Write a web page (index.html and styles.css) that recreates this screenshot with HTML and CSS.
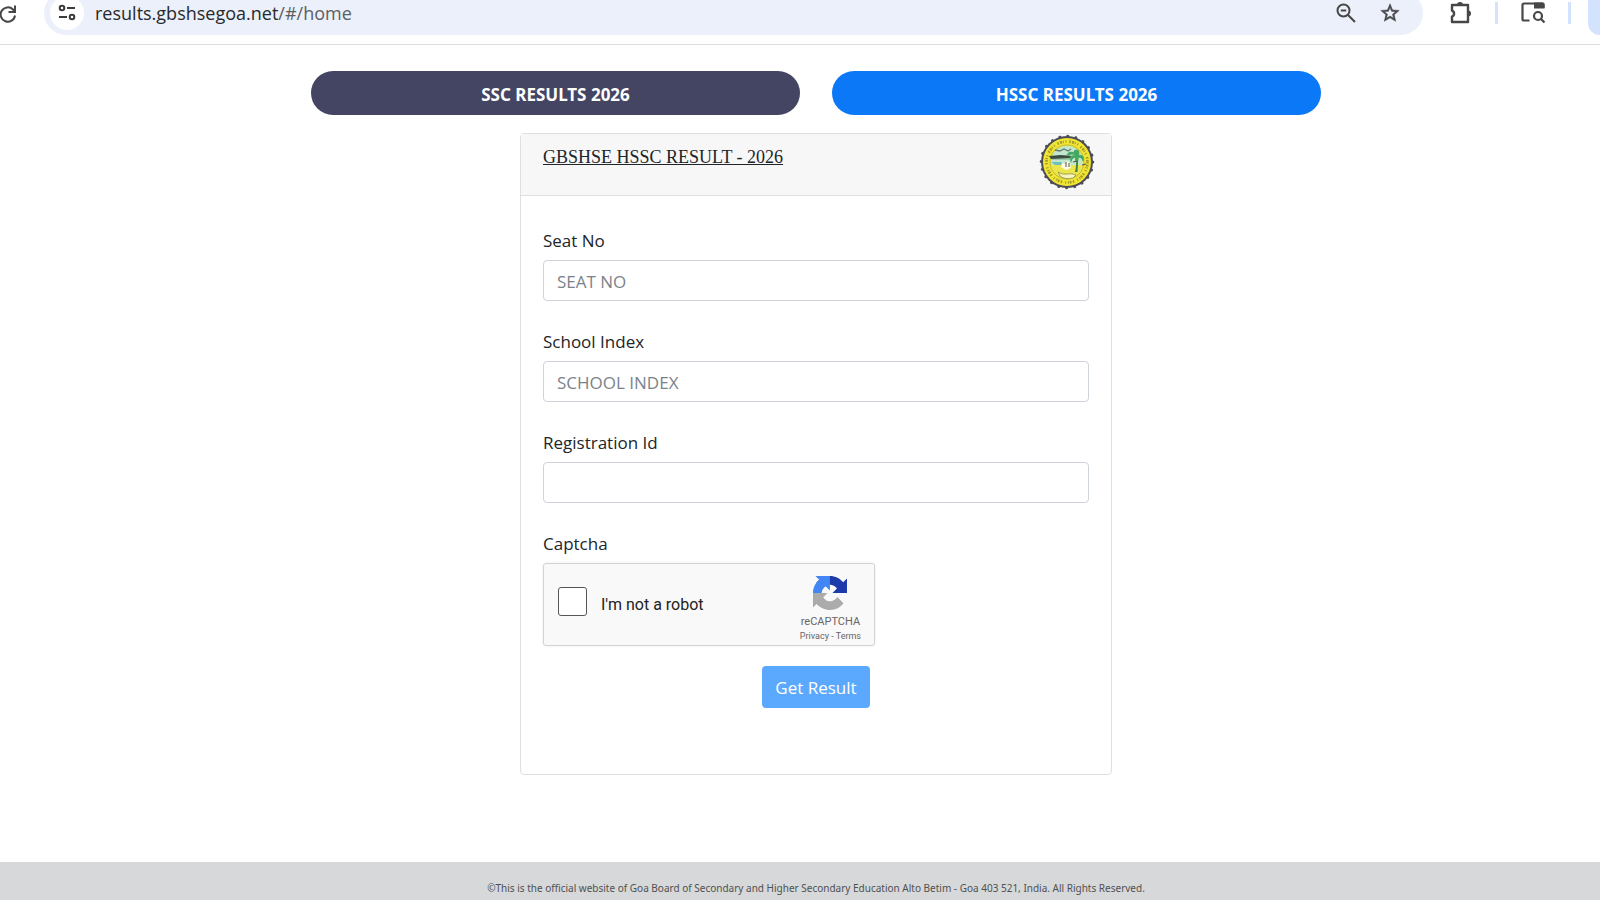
FILE: index.html
```html
<!DOCTYPE html>
<html lang="en">
<head>
<meta charset="utf-8">
<title>GBSHSE Results</title>
<link rel="stylesheet" href="styles.css">
</head>
<body>
<header class="toolbar">
  <button class="icon-btn reload" aria-label="Reload">
    <svg width="16" height="20" viewBox="0 0 16 20" fill="none" stroke="#474747" stroke-width="2"><path d="M15 11.500A7.200 7.200 0 1 1 13 5.500L14.800 7.500"/><path d="M15 1.500V8H8.500"/></svg>
  </button>
  <div class="omnibox">
    <button class="site-info" aria-label="View site information">
      <svg width="18" height="18" viewBox="0 0 18 18" fill="none" stroke="#3c3c3c" stroke-width="2"><circle cx="4" cy="4" r="2.300"/><path d="M9 4h8M1 13h8"/><circle cx="14" cy="13" r="2.300"/></svg>
    </button>
    <div class="url">results.gbshsegoa.net<span class="url-path">/#/home</span></div>
    <button class="icon-btn" aria-label="Zoom">
      <svg width="20" height="20" viewBox="0 0 20 20" fill="none" stroke="#474747" stroke-width="2"><circle cx="7.500" cy="7.500" r="6"/><path d="M12 12l7 7M4.800 7.500h5.400"/></svg>
    </button>
    <button class="icon-btn" aria-label="Bookmark this tab">
      <svg width="22" height="22" viewBox="0 0 24 24" fill="#474747" stroke="#474747" stroke-width=".6"><path d="M22 9.240l-7.190-.62L12 2 9.190 8.630 2 9.240l5.460 4.730L5.820 21 12 17.270 18.180 21l-1.630-7.030L22 9.240zM12 15.400l-3.760 2.270 1-4.280-3.320-2.880 4.380-.38L12 6.100l1.710 4.040 4.380.38-3.320 2.880 1 4.280L12 15.400z"/></svg>
    </button>
  </div>
  <button class="icon-btn" aria-label="Extensions">
    <svg width="24" height="24" viewBox="0 0 24 24"><path d="M3 5h16v17H3v-5.500a3.200 3.200 0 0 0 0-6z" fill="none" stroke="#474747" stroke-width="2.400" stroke-linejoin="round"/><path d="M8 5a3 3 0 0 1 6 0zM19 10.500a3 3 0 0 1 0 6z" fill="#474747"/></svg>
  </button>
  <span class="divider"></span>
  <button class="icon-btn" aria-label="Search tabs">
    <svg width="26" height="24" viewBox="0 0 26 24" fill="none" stroke="#474747" stroke-width="2.200"><path d="M9.500 20.500H4a1.500 1.500 0 0 1-1.500-1.500V5A1.500 1.500 0 0 1 4 3.500h18a1.500 1.500 0 0 1 1.500 1.500v3"/><path d="M14 2.500h9a1.500 1.500 0 0 1 1.500 1.500v4.500H14z" fill="#474747" stroke="none"/><circle cx="18" cy="16" r="4"/><path d="M21 19l3.500 3.500"/></svg>
  </button>
  <span class="divider"></span>
  <span class="profile-chip"></span>
</header>

<main class="page">
  <nav class="tabs">
    <button class="tab tab-ssc">SSC RESULTS 2026</button>
    <button class="tab tab-hssc">HSSC RESULTS 2026</button>
  </nav>

  <section class="card">
    <div class="card-header">
      <h1 class="card-title">GBSHSE HSSC RESULT - 2026</h1>
      <svg class="seal" viewBox="0 0 56 56" role="img" aria-label="Goa Board seal">
        <circle cx="28" cy="28" r="26" fill="#4d4d58"/>
        <circle cx="28" cy="28" r="25.800" fill="none" stroke="#4d4d58" stroke-width="3" stroke-linecap="round" stroke-dasharray=".1 8.005"/>
        <circle cx="28" cy="28" r="24" fill="#f0e532"/>
        <circle cx="28" cy="28" r="20.500" fill="none" stroke="#a39a2a" stroke-width="2.600" stroke-dasharray="1.500 1.200 2 .8 1 1.800 1 3"/>
        <circle cx="28" cy="28" r="17" fill="#ece64c" stroke="#b4ac38" stroke-width=".8"/>
        <path d="M12.500 24a16 16 0 0 1 31 0v7H12z" fill="#c3e6cf"/>
        <path d="M12 26l7-5 6 1 4-3 5 4-3 3z" fill="#9cc8a8"/>
        <path d="M10 22l12-1 10 1-1 2-19 1z" fill="#3c4d41"/>
        <path d="M16 16l5 1 4-2 4 2 3-2" fill="none" stroke="#637b6c" stroke-width="1.300"/>
        <path d="M12 28h10l3 3h-9z" fill="#6cc0b8"/>
        <path d="M36.500 22q1.500 7-.5 16h2.500q1-9 0-16z" fill="#42843e"/>
        <path d="M37 22q-7-1-5 5 1-4 5-4-1 4 1 5 2-3 0-5 6 0 6 4 2-6-5-6 2-3-1-5-3 0-3 3-6-2-6 2 4-2 8 0z" fill="#45a862" stroke="#45a862" stroke-width="1.200"/>
        <path d="M22 33l1-4 3 1 2-3 3 2 1 5-5 2z" fill="#fffbe6"/>
        <path d="M27 28v5M30 29v4M34 28l5-1M43 31l4-1" stroke="#4c553c" stroke-width="1"/>
        <path d="M19 38q4 3 9 2t9 1l-3 3q-8 2-13-2z" fill="#f8f5ba" stroke="#8b8f4b" stroke-width=".8"/>
      </svg>
    </div>
    <form class="form">
      <div class="field">
        <label for="seat">Seat No</label>
        <input class="text-input" id="seat" type="text" placeholder="SEAT NO">
      </div>
      <div class="field">
        <label for="school">School Index</label>
        <input class="text-input" id="school" type="text" placeholder="SCHOOL INDEX">
      </div>
      <div class="field">
        <label for="registration">Registration Id</label>
        <input class="text-input" id="registration" type="text">
      </div>
      <div class="captcha-field">
        <span class="captcha-label">Captcha</span>
        <div class="captcha">
          <input class="robot-box" id="robot" type="checkbox">
          <label class="robot-label" for="robot">I'm not a robot</label>
          <div class="brand">
            <svg width="34" height="34" viewBox="0 0 64 64"><path d="M64 31.955l-.033-1.370V4.687l-7.160 7.160C50.948 4.674 42.033.093 32.050.093c-10.400 0-19.622 4.960-25.458 12.640l11.736 11.860a15.550 15.550 0 0 1 4.754-5.334c2.050-1.600 4.952-2.906 8.968-2.906.485 0 .86.057 1.135.163 4.976.393 9.288 3.140 11.828 7.124l-8.307 8.307L64 31.953" fill="#1c3aa9"/><path d="M31.862.094l-1.370.033H4.594l7.160 7.160C4.580 13.147 0 22.060 0 32.046c0 10.400 4.960 19.622 12.640 25.458L24.500 45.768a15.550 15.550 0 0 1-5.334-4.754c-1.600-2.050-2.906-4.952-2.906-8.968 0-.485.057-.86.163-1.135.393-4.976 3.140-9.288 7.124-11.828l8.307 8.307L31.860.095" fill="#4285f4"/><path d="M.001 32.045l.033 1.370v25.898l7.160-7.160c5.860 7.173 14.774 11.754 24.760 11.754 10.400 0 19.622-4.960 25.458-12.640l-11.736-11.860a15.550 15.550 0 0 1-4.754 5.334c-2.050 1.600-4.952 2.906-8.968 2.906-.485 0-.86-.057-1.135-.163-4.976-.393-9.288-3.140-11.828-7.124l8.307-8.307c-10.522.04-22.400.066-27.295-.005" fill="#ababab"/></svg>
            <span class="brand-name">reCAPTCHA</span>
            <span class="brand-links"><a href="#privacy">Privacy</a> - <a href="#terms">Terms</a></span>
          </div>
        </div>
      </div>
      <button class="submit" type="button">Get Result</button>
    </form>
  </section>
</main>

<footer class="footer">©This is the official website of Goa Board of Secondary and Higher Secondary Education Alto Betim - Goa 403 521, India. All Rights Reserved.</footer>
</body>
</html>
```
FILE: styles.css
```css
* {
  box-sizing: border-box;
}

body {
  margin: 0;
  min-height: 100vh;
  display: flex;
  flex-direction: column;
  background: #fff;
  color: #212529;
  font-family: "Open Sans", "Noto Sans", sans-serif;
  font-size: 17px;
}

button {
  font: inherit;
  border: 0;
  padding: 0;
  cursor: pointer;
}

.toolbar {
  height: 45px;
  display: flex;
  align-items: flex-end;
  padding-bottom: 9px;
  border-bottom: 1px solid #dcdee0;
  overflow: hidden;
}

.toolbar > .icon-btn,
.toolbar > .divider {
  margin-bottom: 11px;
}

.icon-btn {
  display: flex;
  background: none;
}

.omnibox {
  flex: 1;
  height: 44px;
  flex-shrink: 0;
  display: flex;
  align-items: center;
  gap: 23px;
  margin: 0 26px 0 28px;
  padding: 0 22px 0 6px;
  border-radius: 22px;
  background: #ebf0fa;
}

.site-info {
  width: 34px;
  height: 34px;
  display: grid;
  place-items: center;
  border-radius: 50%;
  background: #fff;
}

.url {
  flex: 1;
  margin-left: -12px;
  font-size: 18px;
  color: #27292c;
}

.url-path {
  color: #5b5e63;
}

.divider {
  width: 3px;
  height: 22px;
  margin: 0 22px;
  background: #d3e3fd;
}

.profile-chip {
  width: 12px;
  height: 44px;
  margin-left: -5px;
  border-radius: 22px 0 0 22px;
  background: #d3e3fd;
}

.page {
  flex: 1;
  display: flex;
  flex-direction: column;
  align-items: center;
  gap: 18px;
  padding: 26px 16px 32px 48px;
}

.tabs {
  width: 100%;
  max-width: 1010px;
  display: grid;
  grid-template-columns: 1fr 1fr;
  gap: 32px;
}

.tab {
  height: 44px;
  padding-top: 2px;
  border-radius: 22px;
  color: #fff;
  font-family: "Noto Sans", sans-serif;
  font-weight: 700;
}

.tab-ssc {
  background: #434562;
}

.tab-hssc {
  background: #0a78f7;
}

.card {
  width: 100%;
  max-width: 592px;
  border: 1px solid #dfdfdf;
  border-radius: 4px;
}

.card-header {
  display: flex;
  justify-content: space-between;
  align-items: flex-start;
  padding: 0 16px 5px 22px;
  background: #f7f7f7;
  border-bottom: 1px solid #dfdfdf;
}

.card-title {
  margin: 11px 0 0;
  font: 18px/24px "Liberation Serif", serif;
  text-decoration: underline;
}

.seal {
  width: 56px;
  height: 56px;
}

.form {
  display: flex;
  flex-direction: column;
  padding: 32px 22px 66px;
}

.field {
  display: flex;
  flex-direction: column;
  gap: 6px;
  margin-bottom: 28px;
  line-height: 26px;
}

.text-input {
  width: 100%;
  height: 41px;
  padding: 2px 13px 0;
  border: 1px solid #ced4da;
  border-radius: 4px;
  font: inherit;
  color: #495057;
}

.text-input::placeholder {
  color: #7b838a;
  opacity: 1;
}

.captcha-field {
  display: flex;
  flex-direction: column;
  gap: 6px;
  line-height: 26px;
}

.captcha {
  width: 332px;
  max-width: 100%;
  height: 83px;
  display: flex;
  align-items: center;
  padding: 0 13px 0 14px;
  border: 1px solid #d3d3d3;
  border-radius: 3px;
  background: #f9f9f9;
  box-shadow: 0 0 3px rgba(0, 0, 0, 0.08);
  font-family: Roboto, sans-serif;
}

.robot-box {
  appearance: none;
  width: 29px;
  height: 29px;
  margin: 0 14px 6px 0;
  border: 1px solid #555;
  border-radius: 3px;
  background: #fff;
}

.robot-label {
  font-size: 16px;
  color: #222;
}

.brand {
  display: flex;
  flex-direction: column;
  align-items: center;
  margin-left: auto;
  padding-top: 8px;
  color: #666;
}

.brand-name {
  margin-top: 4px;
  font-size: 11px;
  line-height: 16px;
}

.brand-links {
  font-size: 9px;
  line-height: 12px;
}

.brand-links a {
  color: inherit;
  text-decoration: none;
}

.submit {
  align-self: center;
  height: 42px;
  margin-top: 20px;
  padding: 0 13px;
  border-radius: 4px;
  background: #5ba9fe;
  color: #fff;
}

.footer {
  padding: 14px 16px 0 48px;
  background: #d6d8d9;
  color: #4f5152;
  font-family: "Noto Sans", sans-serif;
  font-size: 10px;
  line-height: 24px;
  text-align: center;
}
```
